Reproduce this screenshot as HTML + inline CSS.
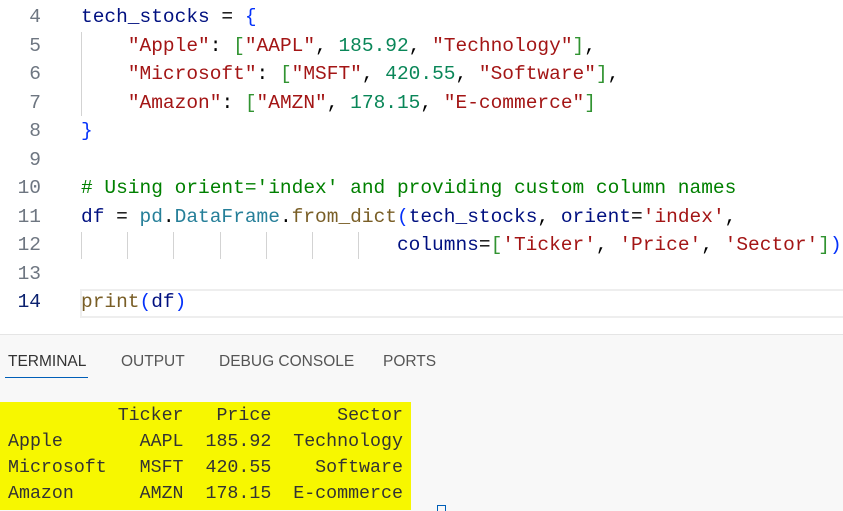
<!DOCTYPE html>
<html><head><style>
body{margin:0;width:843px;height:510px;overflow:hidden;background:#fff;font-family:"Liberation Mono",monospace;position:relative}
.ln{position:absolute;left:0;width:41px;text-align:right;font-size:19.5px;color:#6e7681;line-height:28.5px}
.code{position:absolute;left:81px;font-size:19.5px;line-height:28.5px;white-space:pre;color:#000}
.v{color:#001080}.s{color:#a31515}.n{color:#098658}.b{color:#0431fa}.g{color:#319331}.c{color:#008000}.t{color:#267f99}.f{color:#795e26}
.guide{position:absolute;width:1px;background:#d3d3d3}
.panel{position:absolute;left:0;top:334px;width:843px;height:176px;background:#f8f8f8;border-top:1px solid #e5e5e5}
.tab{position:absolute;top:353px;font-family:"Liberation Sans",sans-serif;font-size:15.5px;color:#555}
.term{position:absolute;left:0;top:402px;width:411px;height:108px;background:#f7f700;font-size:18.3px;line-height:26px;white-space:pre;color:#333}
</style></head><body>
<div class="ln" style="top:3px">4<br>5<br>6<br>7<br>8<br>9<br>10<br>11<br>12<br>13<br><span style="color:#0b216f">14</span></div>
<div style="position:absolute;left:80px;top:289px;width:763px;height:25px;border:2px solid #eee;border-right:none"></div>
<div class="guide" style="left:81px;top:32px;height:84px"></div>
<div class="guide" style="left:81px;top:232px;height:27px"></div>
<div class="guide" style="left:127px;top:232px;height:27px"></div>
<div class="guide" style="left:173px;top:232px;height:27px"></div>
<div class="guide" style="left:220px;top:232px;height:27px"></div>
<div class="guide" style="left:266px;top:232px;height:27px"></div>
<div class="guide" style="left:312px;top:232px;height:27px"></div>
<div class="guide" style="left:358px;top:232px;height:27px"></div>
<div class="code" style="top:3px"><span class="v">tech_stocks</span> = <span class="b">{</span>
    <span class="s">"Apple"</span>: <span class="g">[</span><span class="s">"AAPL"</span>, <span class="n">185.92</span>, <span class="s">"Technology"</span><span class="g">]</span>,
    <span class="s">"Microsoft"</span>: <span class="g">[</span><span class="s">"MSFT"</span>, <span class="n">420.55</span>, <span class="s">"Software"</span><span class="g">]</span>,
    <span class="s">"Amazon"</span>: <span class="g">[</span><span class="s">"AMZN"</span>, <span class="n">178.15</span>, <span class="s">"E-commerce"</span><span class="g">]</span>
<span class="b">}</span>

<span class="c"># Using orient='index' and providing custom column names</span>
<span class="v">df</span> = <span class="t">pd</span>.<span class="t">DataFrame</span>.<span class="f">from_dict</span><span class="b">(</span><span class="v">tech_stocks</span>, <span class="v">orient</span>=<span class="s">'index'</span>,
                           <span class="v">columns</span>=<span class="g">[</span><span class="s">'Ticker'</span>, <span class="s">'Price'</span>, <span class="s">'Sector'</span><span class="g">]</span><span class="b">)</span>

<span class="f">print</span><span class="b">(</span><span class="v">df</span><span class="b">)</span></div>
<div class="panel"></div>
<div class="tab" style="left:8px;color:#333">TERMINAL</div>
<div style="position:absolute;left:5px;top:377px;width:83px;height:1px;background:#005fb8"></div>
<div class="tab" style="left:121px">OUTPUT</div>
<div class="tab" style="left:219px">DEBUG CONSOLE</div>
<div class="tab" style="left:383px">PORTS</div>
<div class="term"><div style="padding:1px 0 0 8px">          Ticker   Price      Sector
Apple       AAPL  185.92  Technology
Microsoft   MSFT  420.55    Software
Amazon      AMZN  178.15  E-commerce</div></div>
<div style="position:absolute;left:437px;top:505px;width:7px;height:5px;border:1px solid #005fb8;border-bottom:none"></div>
</body></html>
